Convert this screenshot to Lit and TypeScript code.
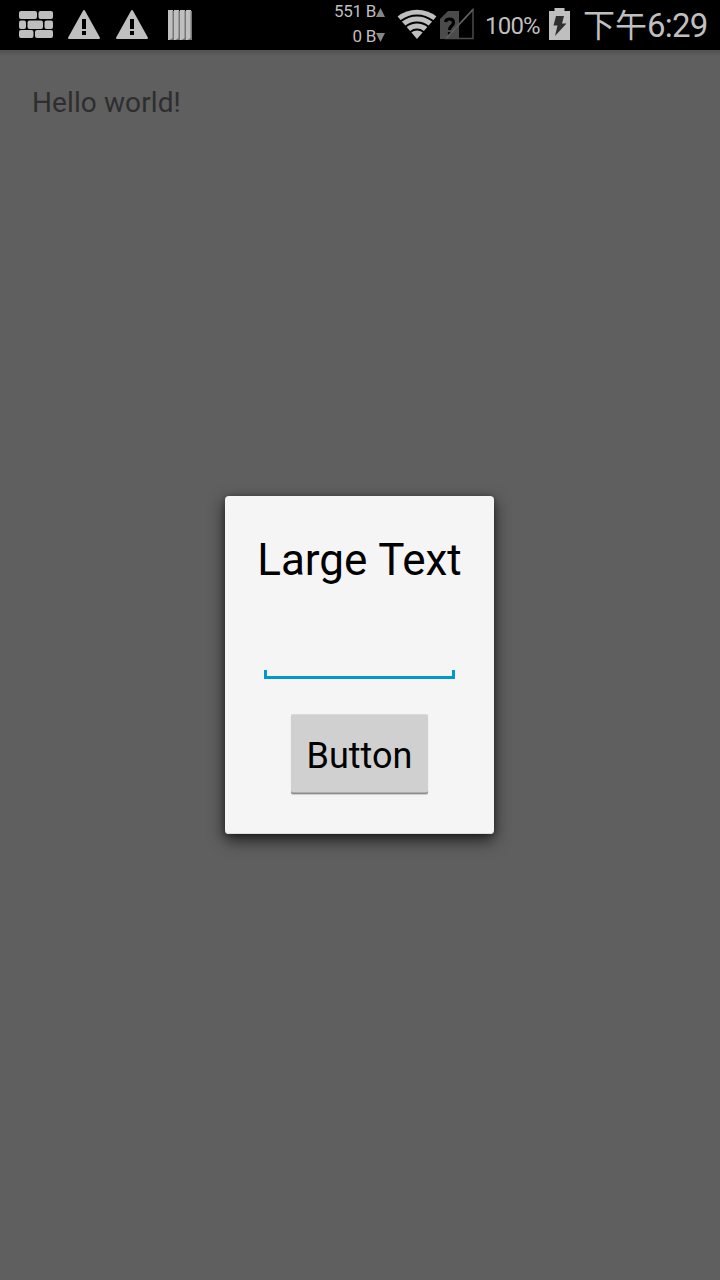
import { LitElement, html, svg, css } from "lit";
import { customElement } from "lit/decorators.js";

@customElement("status-bar")
class StatusBar extends LitElement {
  static styles = css`
    :host {
      display: flex;
      justify-content: space-between;
      height: 50px;
      box-sizing: border-box;
      padding: 0 12px;
      background: #000;
      color: #bfbfbf;
      font-family: Roboto, "Noto Sans CJK SC", sans-serif;
      white-space: nowrap;
    }
    .group { display: flex; align-items: center; }
    svg { display: block; flex: none; }
    .traffic { display: flex; flex-direction: column; align-items: flex-end; width: 60px; margin-right: 12px; padding-bottom: 2px; font-size: 17px; letter-spacing: -0.3px; }
    .rate { display: flex; align-items: center; height: 25px; line-height: 25px; }
    .rate svg { position: relative; top: 1px; }
    .percent { width: 56px; margin-left: 11px; padding-top: 2px; font-size: 24px; line-height: 50px; letter-spacing: -0.8px; }
    .battery { margin: 0 13px 0 8px; }
    .clock { width: 125px; padding-top: 1px; font-size: 32px; line-height: 49px; }
    .digits { font-size: 33px; letter-spacing: -0.8px; }
  `;

  render() {
    const warning = html`<svg width="48" height="50" viewBox="0 0 48 50">
      <path d="M24 11 39 38H9Z" fill="#bfbfbf" stroke="#bfbfbf" stroke-width="2" stroke-linejoin="round" />
      <path d="M22 19h4v10h-4zM22 31h4v4h-4z" fill="#000" />
    </svg>`;
    const fan = (top: number) => {
      const s = (39 - top) / 29;
      return `M${20 - 19.4 * s} ${39 - 22.5 * s}A${31.5 * s} ${31.5 * s} 0 0 1 ${20 + 19.4 * s} ${39 - 22.5 * s}`;
    };
    return html`
      <div class="group">
        <svg width="48" height="50" viewBox="12 0 48 50" fill="#bfbfbf">
          <rect x="19" y="11" width="18" height="8" rx="2" /><rect x="38.5" y="11" width="14.5" height="8" rx="2" />
          <rect x="19" y="20.5" width="7" height="8.5" rx="2" /><rect x="27.5" y="20.5" width="15.5" height="8.5" rx="2" /><rect x="44.5" y="20.5" width="8.5" height="8.5" rx="2" />
          <rect x="19" y="30" width="14.5" height="8" rx="2" /><rect x="35" y="30" width="18" height="8" rx="2" />
        </svg>
        ${warning}${warning}
        <svg width="48" height="50" viewBox="156 0 48 50">
          ${[168, 174, 180, 186].map((x) => svg`<path d="M${x} 10h5v28l-2 2h-3z" fill="#bfbfbf" /><path d="M${x + 4.5} 11h1.500v29h-4.500l3-2z" fill="#777" />`)}
        </svg>
      </div>
      <div class="group">
        <div class="traffic">
          <div class="rate">551 B<svg width="9" height="25" viewBox="0 0 9 25"><path d="M0 17 4.500 8 9 17z" fill="#858585" /></svg></div>
          <div class="rate">0 B<svg width="9" height="25" viewBox="0 0 9 25"><path d="M0 8h9l-4.500 9z" fill="#858585" /></svg></div>
        </div>
        <svg width="40" height="50" viewBox="0 0 40 50">
          <path d=${fan(10) + "L20 39Z"} fill="#bfbfbf" />
          ${[15.6, 22.6, 29.6].map((y) => svg`<path d=${fan(y)} fill="none" stroke="#000" stroke-width="1.900" stroke-linecap="square" />`)}
        </svg>
        <svg width="37" height="50" viewBox="437 0 37 50">
          <path d="M440 19 448 11H459V39H440Z" fill="#4b4b4b" />
          <path d="M445.500 22Q446 19 449.500 19 453.500 19 453.500 22.500 453.500 24.500 451.500 26 449.500 27.500 449.500 30M449.500 32V35" fill="none" stroke="#000" stroke-width="3.200" />
          <path d="M446 38.500 473 9.500V38.500Z" fill="none" stroke="#4b4b4b" stroke-width="1.500" />
          <path d="M446 38.500 473 9.500" stroke="#606060" stroke-width="1.500" />
        </svg>
        <div class="percent">100%</div>
        <svg class="battery" width="21" height="50" viewBox="549 0 21 50">
          <path d="M549 11h5.500V8h10v3H570v29h-21z" fill="#bfbfbf" />
          <path d="M556 16h8l-2 7.500h4.500L555 36l2.500-10.500H553.500z" fill="#303030" />
        </svg>
        <div class="clock">下午<span class="digits">6:29</span></div>
      </div>
    `;
  }
}

@customElement("app-root")
class AppRoot extends LitElement {
  static styles = css`
    :host {
      display: flex;
      flex-direction: column;
      height: 1280px;
      overflow: hidden;
      background: #5f5f5f;
      font-family: Roboto, sans-serif;
    }
    .screen { flex: 1; display: grid; grid-template-rows: 100%; background: linear-gradient(#515151, #5f5f5f 6px); }
    .hello { grid-area: 1 / 1; margin: 0; padding: 32px; color: #2e2e2e; font-size: 28px; line-height: 41px; letter-spacing: 0.1px; }
    .dialog {
      grid-area: 1 / 1;
      align-self: center;
      justify-self: center;
      display: flex;
      flex-direction: column;
      align-items: center;
      box-sizing: border-box;
      width: 269px;
      height: 338px;
      margin-right: 1px;
      padding-top: 32px;
      border-radius: 4px;
      background: #f5f5f5;
      box-shadow: 0 6px 16px rgba(0, 0, 0, 0.7), 0 1px 5px rgba(0, 0, 0, 0.3), inset 0 -1px 0 #ddd;
      color: #000;
      white-space: nowrap;
    }
    .title { font-size: 44px; line-height: 64px; word-spacing: 1px; letter-spacing: -0.05px; }
    .field { width: 191px; height: 9px; margin-top: 78px; box-sizing: border-box; border: 3px solid #0099cc; border-top: 0; }
    .button {
      width: 137px;
      height: 80px;
      margin: 35px 0 0;
      padding: 4px 0 0;
      border: 0;
      border-radius: 2px;
      background: #d0d0d0;
      box-shadow: inset 0 -1.5px 0 #8b8b8b, inset 0 1px 0 #dadada, 0 1px 1px #ccc;
      color: #000;
      font: 36px/76px Roboto, sans-serif;
    }
  `;

  render() {
    return html`
      <status-bar></status-bar>
      <div class="screen">
        <p class="hello">Hello world!</p>
        <div class="dialog">
          <div class="title">Large Text</div>
          <div class="field"></div>
          <button class="button">Button</button>
        </div>
      </div>
    `;
  }
}
